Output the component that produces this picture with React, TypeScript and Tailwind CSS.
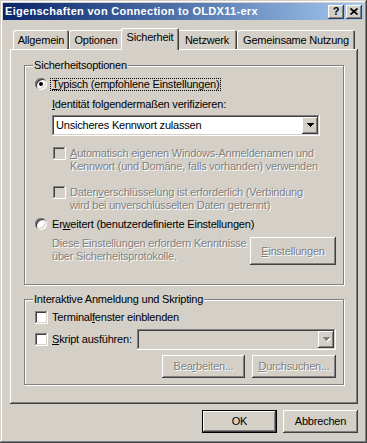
import type { ReactNode } from "react";

const raised =
  "shadow-[inset_-1px_-1px_#404040,inset_1px_1px_#fff,inset_-2px_-2px_#808080,inset_2px_2px_#d4d0c8]";
const sunken =
  "shadow-[inset_-1px_-1px_#fff,inset_1px_1px_#808080,inset_-2px_-2px_#d4d0c8,inset_2px_2px_#404040]";
const grayText = "text-[#808080] [text-shadow:1px_1px_0_#fff]";

function Arrow({ disabled }: { disabled?: boolean }) {
  const d = "M0 0h7v1H0zM1 1h5v1H1zM2 2h3v1H2zM3 3h1v1H3z";
  return (
    <svg width="8" height="5" viewBox="0 0 8 5" shapeRendering="crispEdges" aria-hidden="true">
      {disabled ? (
        <>
          <path d={d} fill="#fff" transform="translate(1 1)" />
          <path d={d} fill="#808080" />
        </>
      ) : (
        <path d={d} fill="#000" />
      )}
    </svg>
  );
}

function ComboBox({ text, disabled, className }: { text?: string; disabled?: boolean; className: string }) {
  return (
    <div
      className={`flex h-[21px] items-center p-[2px] ${sunken} ${disabled ? "bg-[#d4d0c8]" : "bg-white"} ${className}`}
    >
      <span className="flex-1 truncate pl-[2px]">{text}</span>
      <span className={`flex h-[17px] w-[16px] items-center justify-center bg-[#d4d0c8] pl-px ${raised}`}>
        <Arrow disabled={disabled} />
      </span>
    </div>
  );
}

function Button({
  children,
  className,
  isDefault,
  disabled,
}: {
  children: ReactNode;
  className: string;
  isDefault?: boolean;
  disabled?: boolean;
}) {
  return (
    <button
      type="button"
      className={`flex items-center justify-center bg-[#d4d0c8] ${raised} ${isDefault ? "border border-black" : ""} ${disabled ? grayText : "text-black"} ${className}`}
    >
      {children}
    </button>
  );
}

function Checkbox({ disabled }: { disabled?: boolean }) {
  return <span className={`block h-[13px] w-[13px] shrink-0 ${sunken} ${disabled ? "bg-[#d4d0c8]" : "bg-white"}`} />;
}

function Radio({ checked }: { checked?: boolean }) {
  return (
    <span
      className="flex h-[12px] w-[12px] shrink-0 items-center justify-center rounded-full bg-white shadow-[inset_1px_1px_#808080,inset_-1px_-1px_#fff,inset_2px_2px_#404040,inset_-2px_-2px_#d4d0c8]"
    >
      {checked ? <span className="block h-[4px] w-[4px] rounded-full bg-black" /> : null}
    </span>
  );
}

function GroupBox({ title, className, children }: { title: string; className: string; children: ReactNode }) {
  return (
    <fieldset
      className={`border border-[#808080] shadow-[1px_1px_0_#fff,inset_1px_1px_0_#fff] ${className}`}
    >
      <legend className="ml-[8px] bg-[#d4d0c8] px-[1px] leading-[13px]">{title}</legend>
      {children}
    </fieldset>
  );
}

const tabs = [
  { label: "Allgemein", width: "w-[56px]" },
  { label: "Optionen", width: "w-[54px]" },
  { label: "Sicherheit", width: "w-[58px]", active: true },
  { label: "Netzwerk", width: "w-[60px]" },
  { label: "Gemeinsame Nutzung", width: "w-[118px]" },
];

function TitleBar() {
  return (
    <div className="flex h-[17px] items-center bg-linear-to-r from-[#0a246a] to-[#a6caf0] pl-[2px] pr-[2px]">
      <span className="flex-1 truncate text-[11px] font-bold tracking-[0.3px] text-white">
        Eigenschaften von Connection to OLDX11-erx
      </span>
      <span className={`flex h-[14px] w-[16px] items-center justify-center bg-[#d4d0c8] text-[11px] font-bold leading-none ${raised}`}>
        ?
      </span>
      <span className={`ml-[2px] flex h-[14px] w-[16px] items-center justify-center bg-[#d4d0c8] pb-px ${raised}`}>
        <svg width="8" height="7" viewBox="0 0 8 7" aria-hidden="true">
          <path d="M0.5 0.5L7.5 6.5M7.5 0.5L0.5 6.5" stroke="#000" strokeWidth="1.7" />
        </svg>
      </span>
    </div>
  );
}

export default function App() {
  return (
    <div className="flex h-[443px] w-[367px] flex-col bg-[#d4d0c8] p-[3px] font-['Liberation_Sans',Arial,sans-serif] text-[11px] leading-[13px] tracking-[-0.2px] text-black shadow-[inset_-1px_-1px_#404040,inset_1px_1px_#d4d0c8,inset_-2px_-2px_#808080,inset_2px_2px_#fff]">
      <TitleBar />
      <div className="flex flex-1 flex-col pb-[7px] pl-[7px] pr-[6px] pt-[8px]">
        <div className="flex h-[21px] items-end pl-[3px]">
          {tabs.map((tab) =>
            tab.active ? (
              <div
                key={tab.label}
                className={`relative z-10 -mx-[2px] -mb-px flex h-[22px] justify-center rounded-t-[2px] bg-[#d4d0c8] pt-[3px] shadow-[inset_1px_1px_#fff,inset_-1px_0_#404040,inset_-2px_0_#808080] ${tab.width}`}
              >
                {tab.label}
              </div>
            ) : (
              <div
                key={tab.label}
                className={`flex h-[19px] justify-center rounded-t-[2px] pt-[4px] shadow-[inset_1px_1px_#fff,inset_-1px_0_#404040,inset_-2px_0_#808080] ${tab.width}`}
              >
                {tab.label}
              </div>
            ),
          )}
        </div>

        <div className="flex flex-1 flex-col bg-[#d4d0c8] px-[14px] shadow-[inset_-1px_-1px_#404040,inset_1px_1px_#fff,inset_-2px_-2px_#808080]">
          <GroupBox title="Sicherheitsoptionen" className="mt-[10px]">
            <div className="flex flex-col pb-[19px] pl-[10px] pr-[7px]">
              <div className="mt-[5px] flex h-[14px] items-center">
                <Radio checked />
                <span className="ml-[3px] border border-dotted border-black px-[1px] leading-[11px]">
                  <u>T</u>ypisch (empfohlene Einstellungen)
                </span>
              </div>
              <div className="mt-[7px] h-[13px] pl-[17px]">
                <u>I</u>dentität folgendermaßen verifizieren:
              </div>
              <ComboBox text="Unsicheres Kennwort zulassen" className="ml-[17px] mt-[4px] w-[268px]" />
              <div className="ml-[18px] mt-[11px] flex gap-[4px]">
                <Checkbox disabled />
                <span className={grayText}>
                  <u>A</u>utomatisch eigenen Windows-Anmeldenamen und
                  <br />
                  Kennwort (und Domäne, falls vorhanden) verwenden
                </span>
              </div>
              <div className="ml-[18px] mt-[13px] flex gap-[4px]">
                <Checkbox disabled />
                <span className={grayText}>
                  Daten<u>v</u>erschlüsselung ist erforderlich (Verbindung
                  <br />
                  wird bei unverschlüsselten Daten getrennt)
                </span>
              </div>
              <div className="mt-[5px] flex h-[14px] items-center">
                <Radio />
                <span className="ml-[5px]">
                  Er<u>w</u>eitert (benutzerdefinierte Einstellungen)
                </span>
              </div>
              <div className="mt-[6px] flex items-start justify-between pl-[17px]">
                <span className={`pt-[-1px] ${grayText}`}>
                  Diese Einstellungen erfordern Kenntnisse
                  <br />
                  über Sicherheitsprotokolle.
                </span>
                <Button disabled className="h-[28px] w-[86px]">
                  <span>
                    <u>E</u>instellungen
                  </span>
                </Button>
              </div>
            </div>
          </GroupBox>

          <GroupBox title="Interaktive Anmeldung und Skripting" className="mt-[8px]">
            <div className="flex flex-col pb-[6px] pl-[10px] pr-[7px]">
              <div className="mt-[5px] flex h-[13px] items-center gap-[4px]">
                <Checkbox />
                <span>
                  Terminal<u>f</u>enster einblenden
                </span>
              </div>
              <div className="mt-[5px] flex h-[21px] items-center gap-[4px]">
                <Checkbox />
                <span>
                  <u>S</u>kript ausführen:
                </span>
                <ComboBox disabled className="ml-auto w-[199px]" />
              </div>
              <div className="mt-[5px] flex justify-end gap-[7px]">
                <Button disabled className="h-[23px] w-[83px]">
                  <span>
                    Bea<u>r</u>beiten...
                  </span>
                </Button>
                <Button disabled className="h-[23px] w-[84px]">
                  <span>
                    <u>D</u>urchsuchen...
                  </span>
                </Button>
              </div>
            </div>
          </GroupBox>
        </div>

        <div className="mt-[6px] flex justify-end gap-[6px]">
          <Button isDefault className="h-[23px] w-[75px]">
            OK
          </Button>
          <Button className="h-[23px] w-[75px]">Abbrechen</Button>
        </div>
      </div>
    </div>
  );
}
